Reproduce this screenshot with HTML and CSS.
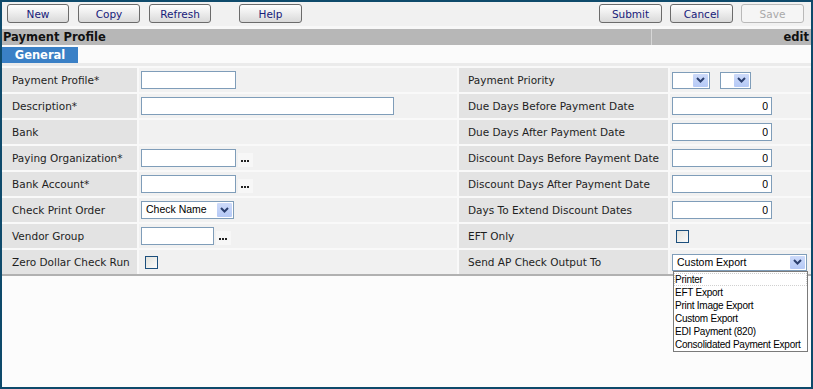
FILE: index.html
```html
<!DOCTYPE html>
<html>
<head>
    <title>Payment Profile</title>
    <link rel="stylesheet" href="styles.css">
</head>
<body>
    <div class="window">
        <div class="toolbar">
            <button class="btn">New</button>
            <button class="btn">Copy</button>
            <button class="btn">Refresh</button>
            <button class="btn btn-help">Help</button>
            <div class="toolbar-right">
                <button class="btn">Submit</button>
                <button class="btn">Cancel</button>
                <button class="btn" disabled>Save</button>
            </div>
        </div>

        <div class="titlebar">
            <div class="title">Payment Profile</div>
            <div class="mode">edit</div>
        </div>

        <div class="tabs">
            <span class="tab">General</span>
        </div>

        <div class="form-grid">
            <!-- row 1 -->
            <div class="label">Payment Profile*</div>
            <div class="value"><input class="field w-95" type="text"></div>
            <div class="label">Payment Priority</div>
            <div class="value">
                <div class="select w-38"><span class="select-text"></span><span class="arrow"><svg width="9" height="6" viewBox="0 0 9 6"><path d="M1 1 L4.5 4.5 L8 1" fill="none" stroke="#2b3f6e" stroke-width="2"/></svg></span></div>
                <div class="select w-31 gap-left"><span class="select-text"></span><span class="arrow"><svg width="9" height="6" viewBox="0 0 9 6"><path d="M1 1 L4.5 4.5 L8 1" fill="none" stroke="#2b3f6e" stroke-width="2"/></svg></span></div>
            </div>

            <!-- row 2 -->
            <div class="label">Description*</div>
            <div class="value"><input class="field w-253" type="text"></div>
            <div class="label">Due Days Before Payment Date</div>
            <div class="value"><input class="field num" type="text" value="0"></div>

            <!-- row 3 -->
            <div class="label">Bank</div>
            <div class="value"></div>
            <div class="label">Due Days After Payment Date</div>
            <div class="value"><input class="field num" type="text" value="0"></div>

            <!-- row 4 -->
            <div class="label">Paying Organization*</div>
            <div class="value">
                <input class="field w-95" type="text">
                <span class="lookup"><svg width="15" height="14" viewBox="0 0 15 14"><rect x="3" y="7" width="2" height="2" fill="#222"/><rect x="6" y="7" width="2" height="2" fill="#222"/><rect x="9" y="7" width="2" height="2" fill="#222"/></svg></span>
            </div>
            <div class="label">Discount Days Before Payment Date</div>
            <div class="value"><input class="field num" type="text" value="0"></div>

            <!-- row 5 -->
            <div class="label">Bank Account*</div>
            <div class="value">
                <input class="field w-95" type="text">
                <span class="lookup"><svg width="15" height="14" viewBox="0 0 15 14"><rect x="3" y="7" width="2" height="2" fill="#222"/><rect x="6" y="7" width="2" height="2" fill="#222"/><rect x="9" y="7" width="2" height="2" fill="#222"/></svg></span>
            </div>
            <div class="label">Discount Days After Payment Date</div>
            <div class="value"><input class="field num" type="text" value="0"></div>

            <!-- row 6 -->
            <div class="label">Check Print Order</div>
            <div class="value">
                <div class="select w-93 tall"><span class="select-text">Check Name</span><span class="arrow"><svg width="9" height="6" viewBox="0 0 9 6"><path d="M1 1 L4.5 4.5 L8 1" fill="none" stroke="#2b3f6e" stroke-width="2"/></svg></span></div>
            </div>
            <div class="label">Days To Extend Discount Dates</div>
            <div class="value"><input class="field num" type="text" value="0"></div>

            <!-- row 7 -->
            <div class="label">Vendor Group</div>
            <div class="value">
                <input class="field w-73" type="text">
                <span class="lookup"><svg width="15" height="14" viewBox="0 0 15 14"><rect x="3" y="7" width="2" height="2" fill="#222"/><rect x="6" y="7" width="2" height="2" fill="#222"/><rect x="9" y="7" width="2" height="2" fill="#222"/></svg></span>
            </div>
            <div class="label">EFT Only</div>
            <div class="value"><input class="check" type="checkbox"></div>

            <!-- row 8 -->
            <div class="label">Zero Dollar Check Run</div>
            <div class="value"><input class="check" type="checkbox"></div>
            <div class="label">Send AP Check Output To</div>
            <div class="value">
                <div class="combo">
                    <div class="select w-135"><span class="select-text">Custom Export</span><span class="arrow"><svg width="9" height="6" viewBox="0 0 9 6"><path d="M1 1 L4.5 4.5 L8 1" fill="none" stroke="#2b3f6e" stroke-width="2"/></svg></span></div>
                    <ul class="dropdown">
                        <li class="focused">Printer</li>
                        <li>EFT Export</li>
                        <li>Print Image Export</li>
                        <li>Custom Export</li>
                        <li>EDI Payment (820)</li>
                        <li>Consolidated Payment Export</li>
                    </ul>
                </div>
            </div>
        </div>
    </div>
</body>
</html>
```

FILE: styles.css
```css
/* General */
body {
    margin: 0;
    padding: 0;
    font-family: "DejaVu Sans", Verdana, sans-serif;
    font-size: 10.5px;
    color: #1e1e1e;
}
.window {
    height: 389px;
    box-sizing: border-box;
    border: 2px solid #0e4a6b;
    background-color: #fcfcfc;
}

/* Toolbar */
.toolbar {
    display: flex;
    align-items: flex-start;
    height: 22px;
    padding: 2px 7px 0 5px;
    background-color: #f1f1f1;
    border-bottom: 3px solid #f8f8f8;
}
.btn {
    width: 62px;
    height: 19px;
    margin-right: 9px;
    padding: 0;
    font-family: "DejaVu Sans", Verdana, sans-serif;
    font-size: 10.5px;
    color: #17207a;
    border: 1px solid #6b6b6b;
    border-radius: 3px;
    background: linear-gradient(#fefefe, #eeeeee 45%, #d9d9d9);
}
.btn-help {
    width: 63px;
    margin-left: 19px;
}
.btn:disabled {
    color: #a9a9a9;
    border-color: #b9b9b9;
    background: #f5f5f5;
}
.toolbar-right {
    display: flex;
    margin-left: auto;
}
.toolbar-right .btn {
    width: 63px;
    margin-right: 8px;
}
.toolbar-right .btn:last-child {
    margin-right: 0;
}

/* Title bar */
.titlebar {
    display: flex;
    height: 16px;
    background-color: #b7b7b7;
    font-size: 11.5px;
    font-weight: bold;
    color: #111;
    line-height: 16px;
}
.title {
    flex: 1;
    padding-left: 1px;
}
.mode {
    width: 157px;
    text-align: right;
    padding-right: 2px;
    border-left: 1px solid #d7d7d7;
}

/* Tabs */
.tabs {
    height: 16px;
    padding-top: 2px;
    background-color: #fbfbfb;
    border-bottom: 3px solid #ebebeb;
}
.tab {
    display: inline-block;
    width: 76px;
    height: 16px;
    line-height: 16px;
    text-align: center;
    background-color: #3a80c6;
    color: #fff;
    font-size: 11.5px;
    font-weight: bold;
}

/* Form grid */
.form-grid {
    display: grid;
    grid-template-columns: 135px 318px 209px 1fr;
    grid-auto-rows: 24px;
    gap: 2px;
    padding: 2px 0 0;
    background-color: #f9f9f9;
    border-bottom: 2px solid #b1b1b1;
}
.label {
    display: flex;
    align-items: center;
    padding-left: 10px;
    background-color: #e3e3e3;
}
.form-grid .label:nth-child(4n+3) {
    padding-left: 9px;
}
.value {
    display: flex;
    align-items: center;
    padding-left: 2px;
    background-color: #f1f1f1;
}

/* Inputs */
.field {
    box-sizing: border-box;
    height: 18px;
    margin: 0;
    padding: 0 3px;
    border: 1px solid #7f9db9;
    background-color: #fff;
    font-family: "Liberation Sans", Arial, sans-serif;
    font-size: 10.5px;
    color: #000;
}
.w-95 { width: 95px; }
.w-253 { width: 253px; }
.w-73 { width: 73px; }
.num {
    width: 100px;
    text-align: right;
}

.lookup {
    display: inline-flex;
    width: 15px;
    height: 14px;
    margin-left: 2px;
    margin-top: 3px;
    background-color: #f7f7f7;
}

.select {
    display: flex;
    box-sizing: border-box;
    height: 17px;
    border: 1px solid #7f9db9;
    background-color: #fff;
    font-family: "Liberation Sans", Arial, sans-serif;
    font-size: 10.5px;
    color: #000;
}
.select.tall {
    height: 18px;
}
.select-text {
    flex: 1;
    padding-left: 4px;
    line-height: 15px;
    white-space: nowrap;
    overflow: hidden;
}
.arrow {
    display: flex;
    align-items: center;
    justify-content: center;
    width: 15px;
    margin: 1px;
    background: linear-gradient(#cddaf9, #b5c9f6);
    border-radius: 1px;
}
.w-38 { width: 38px; }
.w-31 { width: 31px; }
.w-93 { width: 93px; }
.w-135 { width: 135px; }
.gap-left {
    margin-left: 10px;
}

.check {
    appearance: none;
    width: 13px;
    height: 13px;
    margin: 0 0 0 4px;
    border: 1px solid #1c4f7d;
    background: linear-gradient(135deg, #e2e2dc, #fbfbfb);
}

/* Dropdown list */
.combo {
    position: relative;
}
.dropdown {
    position: absolute;
    top: 100%;
    left: 1px;
    width: 135px;
    box-sizing: border-box;
    margin: 0;
    padding: 1px 0 0;
    list-style: none;
    border: 1px solid #7a7a7a;
    background-color: #fff;
    font-family: "Liberation Sans", Arial, sans-serif;
    font-size: 10px;
    letter-spacing: -0.25px;
    color: #000;
}
.dropdown li {
    height: 13px;
    line-height: 13px;
    padding-left: 1px;
    white-space: nowrap;
}
.dropdown li.focused {
    outline: 1px dotted #d0d0d0;
    outline-offset: -1px;
}
```
